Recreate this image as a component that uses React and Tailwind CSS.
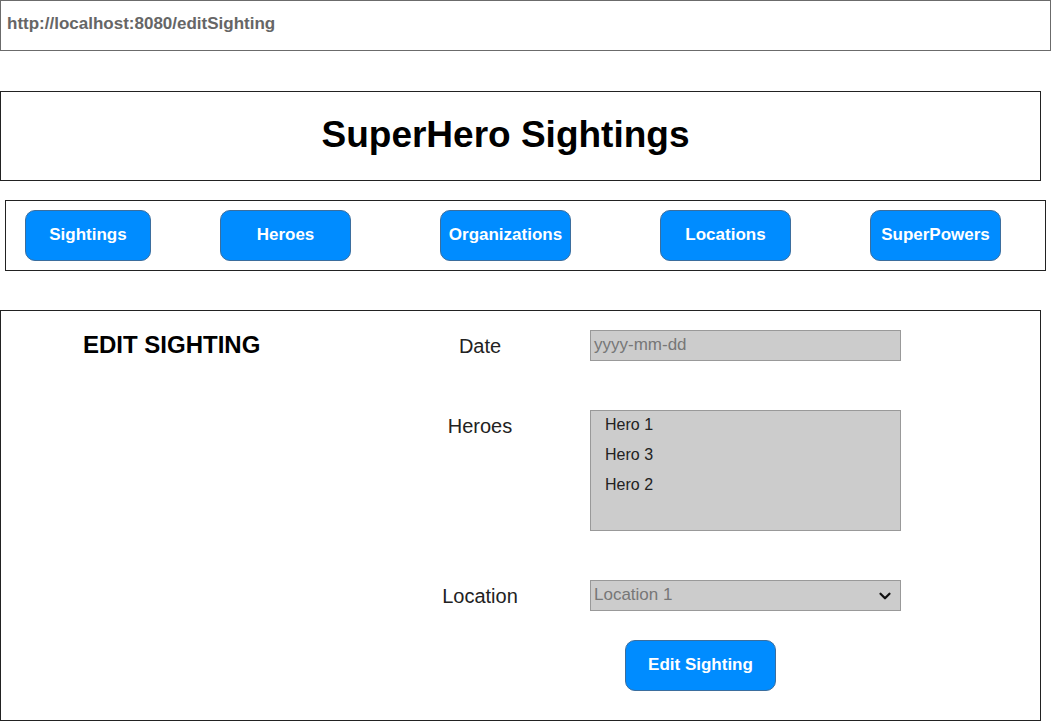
import React from 'react';
import { ChevronDown } from 'lucide-react';

const navItems = [
  { label: 'Sightings', className: 'ml-[19px] w-[126px]' },
  { label: 'Heroes', className: 'ml-[69px] w-[131px]' },
  { label: 'Organizations', className: 'ml-[89px] w-[131px]' },
  { label: 'Locations', className: 'ml-[89px] w-[131px]' },
  { label: 'SuperPowers', className: 'ml-[79px] w-[131px]' },
];

const heroes = ['Hero 1', 'Hero 3', 'Hero 2'];

const BlueButton = ({ children, className }) => (
  <button
    className={`${className} h-[51px] flex items-center justify-center pb-[2px] rounded-[10px] border border-[#3b6e9e] bg-[#008cff] text-white text-[17px] font-bold`}
  >
    {children}
  </button>
);

const App = () => {
  return (
    <div className="w-[1051px] h-[721px] overflow-hidden bg-white font-['Liberation_Sans',Arial,sans-serif] text-black">
      {/* address bar */}
      <div className="w-[1051px] h-[51px] border border-[#6b6b6b] flex items-center pl-[6px] pb-[4px]">
        <span className="text-[17px] font-bold text-[#666]">http://localhost:8080/editSighting</span>
      </div>

      {/* header */}
      <div className="mt-[40px] w-[1041px] h-[90px] border border-[#222] flex items-center justify-center pr-[30px] pb-[2px]">
        <h1 className="text-[37px] font-bold">SuperHero Sightings</h1>
      </div>

      {/* nav */}
      <div className="mt-[19px] ml-[5px] w-[1041px] h-[71px] border border-[#222] flex items-start pt-[9px]">
        {navItems.map((item) => (
          <BlueButton key={item.label} className={item.className}>
            {item.label}
          </BlueButton>
        ))}
      </div>

      {/* main panel */}
      <div className="mt-[39px] w-[1041px] h-[411px] border border-[#222] flex">
        <div className="w-[419px] pl-[82px] pt-[20px]">
          <h2 className="text-[24px] leading-[28px] font-bold">EDIT SIGHTING</h2>
        </div>

        <div className="flex flex-col pt-[19px]">
          <div className="flex items-center h-[31px]">
            <label className="w-[120px] text-center text-[20px] text-[#222]">Date</label>
            <div className="ml-[50px] w-[311px] h-[31px] bg-[#cccccc] border border-[#999] flex items-center pl-[3px] pb-[2px]">
              <span className="text-[17px] text-[#777]">yyyy-mm-dd</span>
            </div>
          </div>

          <div className="flex items-start mt-[49px]">
            <label className="w-[120px] text-center text-[20px] leading-[32px] text-[#222]">Heroes</label>
            <ul className="ml-[50px] w-[311px] h-[121px] bg-[#cccccc] border border-[#999] pl-[14px]">
              {heroes.map((h) => (
                <li key={h} className="h-[30px] leading-[28px] text-[16px] text-[#222]">{h}</li>
              ))}
            </ul>
          </div>

          <div className="flex items-center h-[31px] mt-[49px]">
            <label className="w-[120px] text-center text-[20px] text-[#222]">Location</label>
            <div className="ml-[50px] w-[311px] h-[31px] bg-[#cccccc] border border-[#999] flex items-center justify-between pl-[3px] pr-[6px] pb-[2px]">
              <span className="text-[17px] text-[#777]">Location 1</span>
              <ChevronDown size={18} strokeWidth={3} className="text-[#111] mt-[2px]" />
            </div>
          </div>

          <BlueButton className="mt-[29px] ml-[205px] w-[151px]">Edit Sighting</BlueButton>
        </div>
      </div>
    </div>
  );
};

export default App;
